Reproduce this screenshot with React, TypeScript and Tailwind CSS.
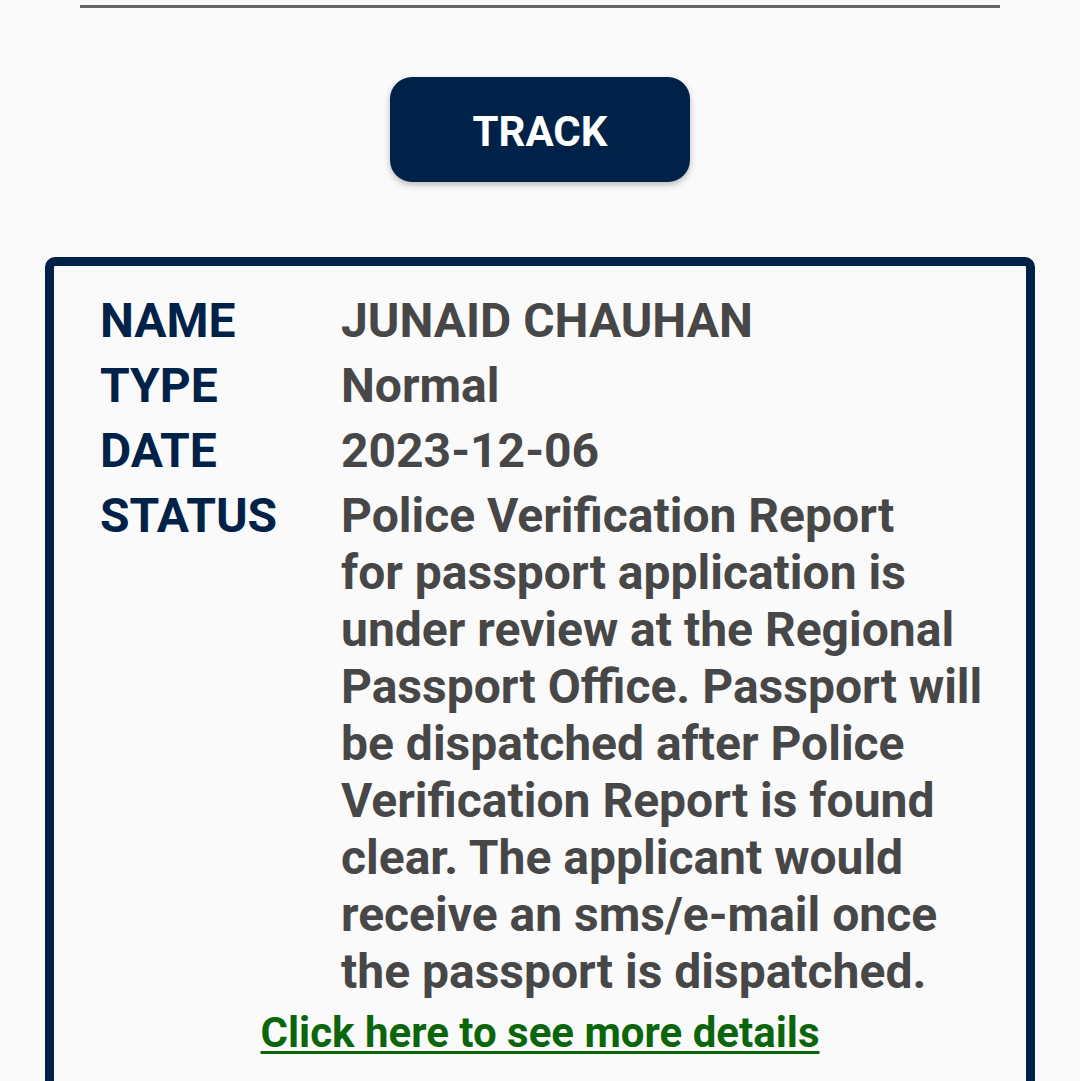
import React from "react";

const rows: { label: string; value: React.ReactNode }[] = [
  { label: "NAME", value: "JUNAID CHAUHAN" },
  { label: "TYPE", value: "Normal" },
  { label: "DATE", value: "2023-12-06" },
  {
    label: "STATUS",
    value: (
      <>
        Police Verification Report
        <br />
        for passport application is under review at the Regional Passport Office. Passport will be dispatched after
        Police Verification Report is found clear. The applicant would receive an sms/e-mail once the passport is
        dispatched.
      </>
    ),
  },
];

export default function App() {
  return (
    <div
      className="min-h-[1081px] w-[1080px] bg-[#fafafa] overflow-hidden"
      style={{ fontFamily: "Roboto, 'Noto Sans', sans-serif" }}
    >
      <div className="pt-[5px] px-[80px]">
        <div className="h-[3px] bg-[#666666]" />
      </div>
      <div className="flex justify-center mt-[69px]">
        <button className="w-[300px] h-[105px] pt-[4px] rounded-[22px] bg-[#002249] text-white text-[42px] font-bold shadow-[0_3px_6px_rgba(0,0,0,0.25)]">
          TRACK
        </button>
      </div>
      <div className="mx-[45px] mt-[75px] border-[9px] border-[#002249] rounded-[10px] pb-[40px]">
        <div className="pt-[22px] pl-[46px] pr-[26px] grid grid-cols-[241px_1fr]">
          {rows.map((r) => (
            <React.Fragment key={r.label}>
              <div className="py-[4px] text-[48px] leading-[57px] font-bold text-[#002249]">{r.label}</div>
              <div className="py-[4px] text-[48px] leading-[57px] font-bold text-[#474747]">{r.value}</div>
            </React.Fragment>
          ))}
        </div>
        <div className="mt-[5px] text-center">
          <a className="text-[42px] leading-[47px] font-bold text-[#0b650b] underline underline-offset-[4px] decoration-[3px]">
            Click here to see more details
          </a>
        </div>
      </div>
    </div>
  );
}
